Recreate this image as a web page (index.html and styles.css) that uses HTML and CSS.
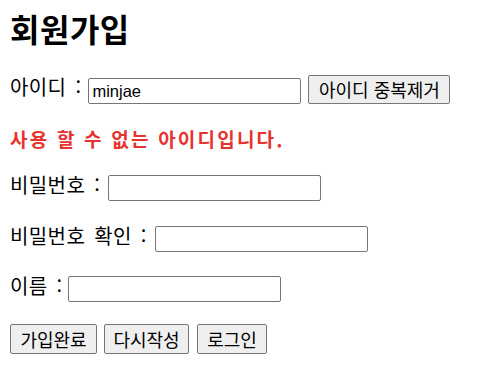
FILE: index.html
```html
<!DOCTYPE html>
<html lang="ko">
<head>
<meta charset="utf-8">
<title>회원가입</title>
<link rel="stylesheet" href="styles.css">
</head>
<body>
<div class="page">
  <h1 class="title">회원가입</h1>
  <div class="row row-id">
    <span class="label">아이디 :</span>
    <input class="field" type="text" value="minjae">
    <button class="btn btn-check" type="button">아이디 중복제거</button>
  </div>
  <p class="error">사용 할 수 없는 아이디입니다.</p>
  <div class="row row-pw">
    <span class="label">비밀번호 :</span>
    <input class="field" type="password">
  </div>
  <div class="row row-pw2">
    <span class="label">비밀번호 확인 :</span>
    <input class="field" type="password">
  </div>
  <div class="row row-name">
    <span class="label">이름 :</span>
    <input class="field" type="text">
  </div>
  <div class="actions">
    <button class="btn btn-small btn-join" type="submit">가입완료</button>
    <button class="btn btn-small btn-reset" type="reset">다시작성</button>
    <button class="btn btn-small btn-login" type="button">로그인</button>
  </div>
</div>
</body>
</html>
```

FILE: styles.css
```css
html, body {
  margin: 0;
  padding: 0;
  background: #ffffff;
}

body {
  font-family: "Noto Sans CJK KR", "Noto Sans", sans-serif;
  color: #000000;
}

.page {
  padding: 6px 10px 0 10px;
}

.title {
  margin: 0;
  height: 44px;
  font-size: 32px;
  line-height: 44px;
  font-weight: 700;
  letter-spacing: 0.5px;
}

.row {
  display: flex;
  align-items: center;
  column-gap: 7px;
}

.label {
  font-size: 20px;
  line-height: 20px;
  letter-spacing: 0.4px;
  word-spacing: 3px;
  white-space: nowrap;
}

.row-id {
  margin-top: 25px;
  height: 29px;
  align-items: flex-end;
}

.row-id .label {
  align-self: flex-start;
  margin-top: 2px;
}

.row-pw {
  margin-top: 24px;
  height: 26px;
}

.row-pw2 {
  margin-top: 25px;
  height: 26px;
}

.row-name {
  margin-top: 24px;
  height: 26px;
}

.row-pw .label,
.row-pw2 .label {
  margin-bottom: 6px;
  margin-right: 1px;
}

.row-name .label {
  margin-bottom: 6px;
  margin-right: -2px;
}

.field {
  box-sizing: border-box;
  width: 213px;
  height: 26px;
  margin: 0;
  padding: 1px 3px;
  border: 1px solid #767676;
  border-radius: 2px;
  background: #ffffff;
  font-family: "Liberation Sans", Arial, sans-serif;
  font-size: 16.5px;
  color: #000000;
}

.error {
  margin: 23px 0 0 0;
  height: 24px;
  font-size: 19px;
  line-height: 24px;
  font-weight: 700;
  letter-spacing: 2.2px;
  color: #e8322e;
}

.btn {
  box-sizing: border-box;
  margin: 0;
  padding: 0;
  border: 1px solid #767676;
  border-radius: 2px;
  background: #efefef;
  font-family: "Noto Sans CJK KR", "Noto Sans", sans-serif;
  color: #000000;
  text-align: center;
  white-space: nowrap;
}

.btn-check {
  width: 142px;
  height: 29px;
  font-size: 18px;
  line-height: 27px;
}

.actions {
  margin-top: 22px;
  display: flex;
  column-gap: 7px;
}

.btn-small {
  height: 30px;
  font-size: 18px;
  line-height: 28px;
}

.btn-join {
  width: 87px;
}

.btn-reset {
  width: 85px;
}

.btn-login {
  width: 70px;
  margin-left: 1px;
}
```
